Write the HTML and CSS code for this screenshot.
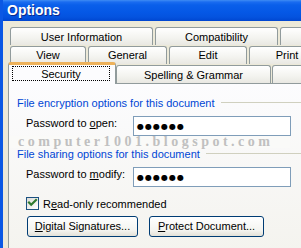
FILE: index.html
```html
<!DOCTYPE html>
<html>
<head>
<meta charset="utf-8">
<title>Options</title>
<link rel="stylesheet" href="styles.css">
</head>
<body>
<div class="window">
  <div class="titlebar"><span class="title">Options</span></div>
  <div class="client">
    <div class="tabrow row1">
      <div class="tab t-userinfo">User Information</div>
      <div class="tab t-compat">Compatibility</div>
      <div class="tab t-more"></div>
    </div>
    <div class="tabrow row2">
      <div class="tab t-view">View</div>
      <div class="tab t-general">General</div>
      <div class="tab t-edit">Edit</div>
      <div class="tab t-print">Print</div>
    </div>
    <div class="tabrow row3">
      <div class="tab selected t-security"><span class="focus">Security</span></div>
      <div class="tab t-spelling">Spelling &amp; Grammar</div>
      <div class="tab t-track"></div>
    </div>
    <div class="page">
      <div class="group-head first"><span>File encryption options for this document</span><span class="rule"></span></div>
      <div class="field">
        <span class="label">Password to <u>o</u>pen:</span>
        <span class="textbox"><span class="dots">●●●●●●</span></span>
      </div>
      <div class="watermark">computer1001.blogspot.com</div>
      <div class="group-head"><span>File sharing options for this document</span><span class="rule"></span></div>
      <div class="field">
        <span class="label">Password to <u>m</u>odify:</span>
        <span class="textbox"><span class="dots">●●●●●●</span></span>
      </div>
      <div class="check-row">
        <span class="checkbox"><svg width="11" height="11" viewBox="0 0 11 11"><path d="M2 4.5 L4.2 6.8 L9 2" fill="none" stroke="#2f7a2f" stroke-width="2.2" stroke-linecap="square"/></svg></span>
        <span class="check-label">R<u>e</u>ad-only recommended</span>
      </div>
      <div class="button-row">
        <span class="button b-digital"><u>D</u>igital Signatures...</span>
        <span class="button b-protect"><u>P</u>rotect Document...</span>
      </div>
    </div>
  </div>
</div>
</body>
</html>
```
FILE: styles.css
```css
* { box-sizing: border-box; }
html, body { margin: 0; padding: 0; }
body {
  width: 301px;
  height: 248px;
  overflow: hidden;
  background: #ECE9D8;
  font-family: "Liberation Sans", Arial, sans-serif;
  font-size: 11px;
  line-height: 13px;
  color: #000;
}
.window {
  width: 340px;
  height: 248px;
  border-left: 3px solid #0B58E4;
  background: #ECE9D8;
}
.titlebar {
  height: 21px;
  padding-left: 4px;
  background: linear-gradient(to bottom, #3f8cf3 0px, #1a6cf0 2px, #0a5fea 5px, #0558e6 12px, #0453df 17px, #0046d0 21px);
  line-height: 21px;
}
.title {
  font-family: "Liberation Sans Narrow", "Liberation Sans", Arial, sans-serif;
  font-weight: bold;
  font-size: 14px;
  color: #fff;
  text-shadow: 1px 1px 0 #0a2a8c;
}
.client {
  padding: 6px 0 0 5px;
}
.tabrow {
  display: flex;
  white-space: nowrap;
}
.tab {
  flex-shrink: 0;
  height: 18px;
  border: 1px solid #919B9C;
  border-bottom: none;
  border-radius: 3px 3px 0 0;
  background: linear-gradient(to bottom, #ffffff, #f3f3ef 60%, #e9e8e2);
  text-align: center;
  padding-top: 3px;
}
.row1 { margin-left: 2px; gap: 2px; }
.row2 { margin-left: 2px; gap: 2px; margin-top: 1px; }
.row2 .tab { padding-top: 2px; }
.row3 {
  height: 21px;
  margin-top: -2px;
  align-items: flex-end;
}
.t-userinfo { width: 143px; }
.t-compat { width: 123px; }
.t-more { width: 80px; }
.t-view { width: 76px; }
.t-general { width: 79px; }
.t-edit { width: 78px; }
.t-print { width: 76px; }
.t-security { width: 108px; }
.t-spelling { width: 155px; }
.t-track { width: 90px; margin-left: 1px; }
.tab.selected {
  position: relative;
  z-index: 1;
  height: 22px;
  margin-bottom: -1px;
  padding-top: 0;
  border-top: 3px solid #EDB15A;
  background: #FCFCFE;
  text-align: left;
}
.focus {
  display: block;
  margin: 1px 5px 0 3px;
  height: 15px;
  border: 1px dotted #000;
  padding-top: 1px;
  line-height: 12px;
  text-align: center;
}
.page {
  width: 320px;
  height: 170px;
  border: 1px solid #919B9C;
  background: linear-gradient(to bottom, #FCFCFE, #F4F3EE);
}
.group-head {
  display: flex;
  padding-left: 8px;
  color: #0046D5;
  white-space: nowrap;
}
.group-head.first { margin-top: 13px; }
.rule {
  flex: 1;
  height: 1px;
  margin: 5px 0 0 6px;
  background: #D0D0BF;
}
.field {
  display: flex;
  margin-top: 6px;
  padding-left: 17px;
}
.label {
  width: 107px;
  flex-shrink: 0;
  margin-top: 1px;
}
.textbox {
  display: flex;
  align-items: center;
  width: 158px;
  height: 20px;
  border: 1px solid #7F9DB9;
  background: #fff;
  padding-left: 3px;
}
.dots {
  font-family: "DejaVu Sans", sans-serif;
  font-size: 8px;
  line-height: 9px;
  letter-spacing: 1px;
}
.watermark {
  width: 281px;
  height: 12px;
  padding-left: 9px;
  font-family: "Liberation Serif", "Times New Roman", serif;
  font-weight: bold;
  font-size: 14px;
  line-height: 12px;
  letter-spacing: 3.5px;
  color: #c0c0c0;
  background: #FAFAF8;
  white-space: nowrap;
}
.check-row {
  display: flex;
  margin-top: 10px;
  padding-left: 17px;
}
.checkbox {
  width: 13px;
  height: 13px;
  border: 1px solid #1C5180;
  background: linear-gradient(135deg, #DCDCD7, #ffffff);
  display: flex;
}
.check-label {
  margin: 1px 0 0 4px;
}
.button-row {
  display: flex;
  gap: 11px;
  margin-top: 5px;
  padding-left: 18px;
}
.button {
  height: 21px;
  border: 1px solid #003C74;
  border-radius: 3px;
  background: linear-gradient(to bottom, #ffffff, #f4f4f0 70%, #e3e1d8);
  text-align: center;
  line-height: 19px;
  white-space: nowrap;
}
.b-digital { width: 111px; }
.b-protect { width: 115px; }
```
